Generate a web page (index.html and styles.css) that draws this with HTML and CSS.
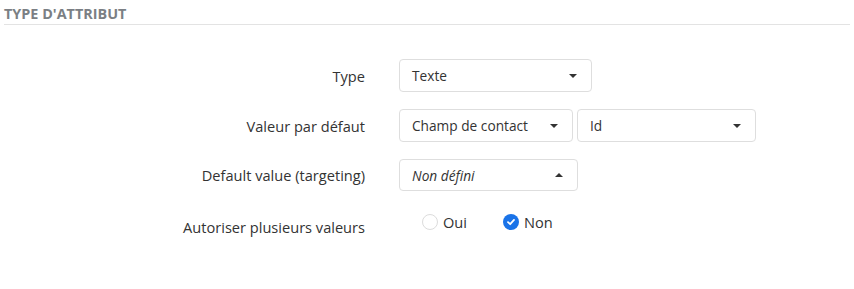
FILE: index.html
```html
<!DOCTYPE html>
<html lang="fr">
<head>
    <meta charset="UTF-8">
    <title>Type d'attribut</title>
    <link rel="stylesheet" href="styles.css">
</head>
<body>
    <div class="section">
        <h2 class="section-title">Type d'attribut</h2>

        <div class="form">
            <div class="form-row">
                <label class="form-label">Type</label>
                <div class="controls">
                    <div class="select select-type">
                        <span class="select-value">Texte</span>
                        <span class="caret"></span>
                    </div>
                </div>
            </div>

            <div class="form-row">
                <label class="form-label">Valeur par défaut</label>
                <div class="controls">
                    <div class="select select-source">
                        <span class="select-value">Champ de contact</span>
                        <span class="caret"></span>
                    </div>
                    <div class="select select-field">
                        <span class="select-value">Id</span>
                        <span class="caret"></span>
                    </div>
                </div>
            </div>

            <div class="form-row">
                <label class="form-label">Default value (targeting)</label>
                <div class="controls">
                    <div class="select select-target open">
                        <span class="select-value placeholder">Non défini</span>
                        <span class="caret"></span>
                    </div>
                </div>
            </div>

            <div class="form-row form-row-radio">
                <label class="form-label">Autoriser plusieurs valeurs</label>
                <div class="controls radios">
                    <label class="radio">
                        <span class="radio-dot"></span>
                        Oui
                    </label>
                    <label class="radio checked">
                        <span class="radio-dot">
                            <svg width="10" height="10" viewBox="0 0 10 10">
                                <path d="M2 5.2 L4.2 7.2 L8 2.9" fill="none" stroke="#fff" stroke-width="1.8" stroke-linecap="round" stroke-linejoin="round"/>
                            </svg>
                        </span>
                        Non
                    </label>
                </div>
            </div>
        </div>
    </div>
</body>
</html>
```

FILE: styles.css
```css
body {
    margin: 0;
    font-family: 'Open Sans', 'Noto Sans', sans-serif;
    font-size: 14px;
    color: #333;
    background-color: white;
}
.section {
    padding: 0 4px;
}
.section-title {
    margin: 0;
    padding-top: 4px;
    height: 20px;
    font-size: 14.4px;
    font-weight: bold;
    text-transform: uppercase;
    color: #7b7f84;
    line-height: 19px;
    border-bottom: 1px solid #e3e3e3;
}
.form {
    margin-top: 34px;
    display: flex;
    flex-direction: column;
    gap: 18px;
}
.form-row {
    display: grid;
    grid-template-columns: 361px auto;
    column-gap: 34px;
    align-items: center;
    height: 32px;
}
.form-label {
    text-align: right;
    font-size: 14.6px;
    color: #333;
}
.form-row-radio .form-label {
    margin-top: 4px;
}
.controls {
    display: flex;
    gap: 4px;
    align-items: center;
}
.select {
    box-sizing: border-box;
    height: 33px;
    border: 1px solid #dedede;
    border-radius: 4px;
    padding: 0 14px 0 12px;
    display: flex;
    align-items: center;
    justify-content: space-between;
    background-color: white;
    font-size: 13.7px;
}
.select-type {
    width: 193px;
}
.select-source {
    width: 174px;
}
.select-field {
    width: 179px;
}
.select-target {
    width: 179px;
    height: 32px;
}
.placeholder {
    font-style: italic;
}
.caret {
    width: 0;
    height: 0;
    border-left: 4px solid transparent;
    border-right: 4px solid transparent;
    border-top: 4px solid #333;
}
.open .caret {
    border-top: none;
    border-bottom: 4px solid #333;
}
.radios {
    padding-left: 23px;
    margin-bottom: 6px;
    gap: 36px;
}
.radio {
    display: flex;
    align-items: center;
    gap: 5px;
    font-size: 14.6px;
}
.radio-dot {
    box-sizing: border-box;
    width: 16px;
    height: 16px;
    border-radius: 50%;
    border: 1px solid #dcdcdc;
    background-color: white;
    display: flex;
    align-items: center;
    justify-content: center;
}
.checked .radio-dot {
    border: none;
    background-color: #1a73e8;
}
```
